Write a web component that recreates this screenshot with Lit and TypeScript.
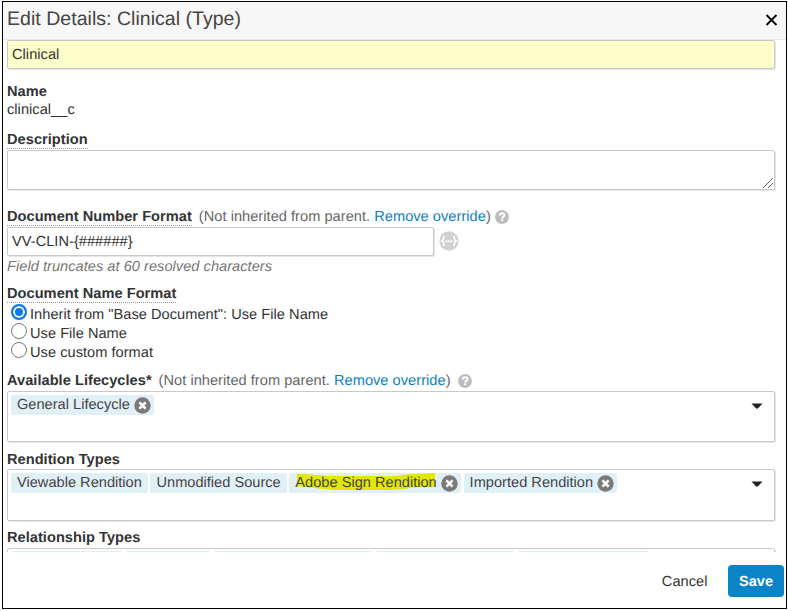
import { LitElement, html, css, nothing } from "lit";
import { customElement, property } from "lit/decorators.js";

const helpIcon = html`<svg width="14" height="14" viewBox="0 0 14 14">
  <circle cx="7" cy="7" r="6.9" fill="#bcbcbc" />
  <path d="M4.6 5.6C4.7 4 5.8 3.3 7.1 3.3C8.5 3.3 9.5 4.1 9.5 5.2C9.5 6.7 7.2 6.6 7.2 8.4" fill="none" stroke="#fff" stroke-width="1.9" />
  <rect x="6.2" y="9.2" width="2" height="2" fill="#fff" />
</svg>`;

const removeIcon = html`<svg width="17" height="17" viewBox="0 0 17 17">
  <circle cx="8.5" cy="8.5" r="8.2" fill="#7a7a7a" />
  <path d="M5.4 5.4L11.6 11.6M11.6 5.4L5.4 11.6" stroke="#fff" stroke-width="2.7" />
</svg>`;

const tokenIcon = html`<svg width="20" height="20" viewBox="0 0 20 20">
  <circle cx="10" cy="10" r="9.7" fill="#cfd1d2" />
  <path d="M6 5.6C4.6 5.6 4.4 6.2 4.4 7.3C4.4 8.8 4.3 9.6 3 10C4.3 10.4 4.4 11.2 4.4 12.7C4.4 13.8 4.6 14.4 6 14.4M14 5.6C15.4 5.6 15.6 6.2 15.6 7.3C15.6 8.8 15.7 9.6 17 10C15.7 10.4 15.6 11.2 15.6 12.7C15.6 13.8 15.4 14.4 14 14.4" fill="none" stroke="#fff" stroke-width="1.5" />
  <path d="M6.3 10.4H13.7" stroke="#fff" stroke-width="1.6" stroke-dasharray="1.7 .3" />
</svg>`;

@customElement("chip-item")
class ChipItem extends LitElement {
  @property() label = "";
  @property({ type: Boolean }) removable = false;
  @property({ type: Boolean }) marked = false;

  static styles = css`
    :host {
      display: flex;
      align-items: center;
      height: 20px;
      padding: 0 6px;
      border-radius: 2px;
      background: #e1f0f7;
      color: #444;
      letter-spacing: 0.01px;
      white-space: nowrap;
      box-sizing: border-box;
    }
    :host([removable]) { padding-right: 3.3px; }
    .label { position: relative; line-height: 20px; }
    .text { position: relative; }
    .marker { position: absolute; left: 2px; top: 0; width: 139px; height: 18px; }
    .remove { display: flex; margin-left: 4px; }
  `;

  render() {
    return html`<span class="label">
        ${this.marked
          ? html`<svg class="marker" viewBox="0 0 139 18" preserveAspectRatio="none">
              <path d="M0 1C14 1 24 3 40 3L82 3C98 4 104 2 114 1L138 0V14C124 14 116 14 108 16C98 17 90 17 84 17L36 17C22 16 12 14 0 13Z" fill="#e3e800" />
            </svg>`
          : nothing}<span class="text">${this.label}</span></span>
      ${this.removable ? html`<span class="remove">${removeIcon}</span>` : nothing}`;
  }
}

@customElement("app-root")
class AppRoot extends LitElement {
  static styles = css`
    :host {
      display: block;
      height: 611px;
      box-sizing: border-box;
      padding: 1px 1px 2px 2px;
      background: #fff;
      font: 14.6px/18px "Liberation Sans", Arial, sans-serif;
      letter-spacing: 0.035px;
      text-rendering: geometricPrecision;
      color: #333;
    }
    .dialog {
      display: flex;
      flex-direction: column;
      height: 608px;
      box-sizing: border-box;
      border: 1px solid #000;
    }
    .header {
      flex: none;
      display: flex;
      justify-content: space-between;
      align-items: center;
      height: 38px;
      box-sizing: border-box;
      padding: 0 8px 2px 4px;
      background: #f7f7f7;
      border-bottom: 1px solid #e9e9e9;
    }
    .title { font-size: 19.5px; color: #444; padding-bottom: 1px; }
    .close { display: block; }
    .body {
      flex: none;
      height: 512px;
      overflow: hidden;
      padding: 0 11px 0 4px;
    }
    .field {
      box-sizing: border-box;
      border: 1px solid #c8c8c8;
      border-radius: 2px;
      background: #fff;
      box-shadow: 1px 1px 0 #e6e6e6;
      margin-bottom: 1px;
    }
    .input { display: flex; align-items: center; height: 29px; padding: 1px 4px 0; }
    .yellow { background: #ffffcb; }
    .section { display: flex; flex-direction: column; }
    .name { padding-top: 12px; }
    .desc { padding-top: 12px; }
    .number { padding-top: 16px; }
    .nameformat { padding-top: 9px; }
    .lifecycles { padding-top: 11px; }
    .types { padding-top: 7px; }
    .row { display: flex; align-items: center; height: 19px; white-space: nowrap; }
    .row.plain { height: 18px; }
    .label { font-weight: bold; line-height: 16px; padding-top: 2px; }
    .last .label { line-height: 18px; padding-top: 0; }
    .value { line-height: 16px; padding-top: 2px; }
    .dotted { border-bottom: 1px dotted #999; }
    .note { color: #666; margin-left: 7px; line-height: 18px; }
    .lifecycles .note { line-height: 16px; padding-top: 2px; }
    .link { color: #0a7fc6; }
    .help { display: flex; margin-left: 4px; }
    .help.wide { margin-left: 7px; padding-top: 1px; }
    .area { display: flex; align-items: flex-end; justify-content: flex-end; height: 40px; margin-top: 1px; }
    .grip { display: block; }
    .numrow { display: flex; align-items: center; gap: 5px; margin-top: 1px; }
    .numrow .input { width: 427px; }
    .token { display: flex; margin-top: -3px; }
    .hint { font-style: italic; color: #777; height: 18px; line-height: 20px; }
    .radio { display: flex; height: 19px; padding: 1px 0 0 4px; gap: 3px; box-sizing: border-box; line-height: 22px; }
    .dot { flex: none; width: 16px; height: 16px; box-sizing: border-box; border: 1px solid #767676; border-radius: 50%; background: #fff; }
    .dot.on { border: 2px solid #0b76ef; background: #0b76ef; box-shadow: inset 0 0 0 2px #fff; }
    .picker { display: flex; align-items: flex-start; height: 52px; margin-top: 1px; padding: 3px 11px 0 3px; }
    .lifecycles .picker { margin-top: 2px; height: 51px; }
    .last .picker { padding-top: 2px; }
    .chips { flex: 1; display: flex; gap: 2.6px; }
    .last .chips { gap: 3px; }
    .caret { display: block; margin-top: 8px; }
    .footer { flex: 1; display: flex; justify-content: flex-end; align-items: center; gap: 20.5px; padding: 1px 2px 0 0; }
    .cancel { padding-top: 2px; }
    .save {
      display: flex; align-items: center; justify-content: center;
      width: 56px; height: 32px; padding-top: 2px; box-sizing: border-box; border-radius: 4px;
      background: #0a84c6; color: #fff; font-weight: bold;
    }
    .blank { flex: none; box-sizing: border-box; }
  `;

  private caret() {
    return html`<svg class="caret" width="12" height="7" viewBox="0 0 12 7"><path d="M.5 .5H11.5L7.3 5.1Q6 6.3 4.7 5.1Z" fill="#222" /></svg>`;
  }

  private picker(chips: { label: string; removable?: boolean; marked?: boolean }[]) {
    return html`<div class="field picker">
      <div class="chips">
        ${chips.map((c) => html`<chip-item .label=${c.label} ?removable=${c.removable} ?marked=${c.marked}></chip-item>`)}
      </div>
      ${this.caret()}
    </div>`;
  }

  private note() {
    return html`<span class="note">(Not inherited from parent. <span class="link">Remove override</span>)</span>`;
  }

  render() {
    const formats = ['Inherit from "Base Document": Use File Name', "Use File Name", "Use custom format"];
    const relationWidths = [112, 84, 160, 138, 132];
    return html`<div class="dialog">
      <div class="header">
        <span class="title">Edit Details: Clinical (Type)</span>
        <svg class="close" width="13" height="13" viewBox="0 0 13 13"><path d="M1.5 2L11.5 12M11.5 2L1.5 12" stroke="#111" stroke-width="2" /></svg>
      </div>
      <div class="body">
        <div class="field input yellow">Clinical</div>
        <div class="section name">
          <div class="row plain"><span class="label">Name</span></div>
          <div class="row plain"><span class="value">clinical__c</span></div>
        </div>
        <div class="section desc">
          <div class="row"><span class="label dotted">Description</span></div>
          <div class="field area">
            <svg class="grip" width="12" height="12" viewBox="0 0 12 12"><path d="M1 11L11 1M6 11L11 6" stroke="#666" stroke-width="1" /></svg>
          </div>
        </div>
        <div class="section number">
          <div class="row"><span class="label dotted">Document Number Format</span>${this.note()}<span class="help">${helpIcon}</span></div>
          <div class="numrow"><div class="field input">VV-CLIN-{######}</div><span class="token">${tokenIcon}</span></div>
          <div class="hint">Field truncates at 60 resolved characters</div>
        </div>
        <div class="section nameformat">
          <div class="row"><span class="label dotted">Document Name Format</span></div>
          ${formats.map((f, i) => html`<div class="radio"><span class="dot ${i === 0 ? "on" : ""}"></span><span>${f}</span></div>`)}
        </div>
        <div class="section lifecycles">
          <div class="row plain"><span class="label">Available Lifecycles*</span>${this.note()}<span class="help wide">${helpIcon}</span></div>
          ${this.picker([{ label: "General Lifecycle", removable: true }])}
        </div>
        <div class="section types">
          <div class="row plain"><span class="label">Rendition Types</span></div>
          ${this.picker([
            { label: "Viewable Rendition" },
            { label: "Unmodified Source" },
            { label: "Adobe Sign Rendition", removable: true, marked: true },
            { label: "Imported Rendition", removable: true },
          ])}
        </div>
        <div class="section types last">
          <div class="row plain"><span class="label">Relationship Types</span></div>
          <div class="field picker">
            <div class="chips">
              ${relationWidths.map((w) => html`<chip-item class="blank" style="width:${w}px"></chip-item>`)}
            </div>
          </div>
        </div>
      </div>
      <div class="footer"><span class="cancel">Cancel</span><span class="save">Save</span></div>
    </div>`;
  }
}
